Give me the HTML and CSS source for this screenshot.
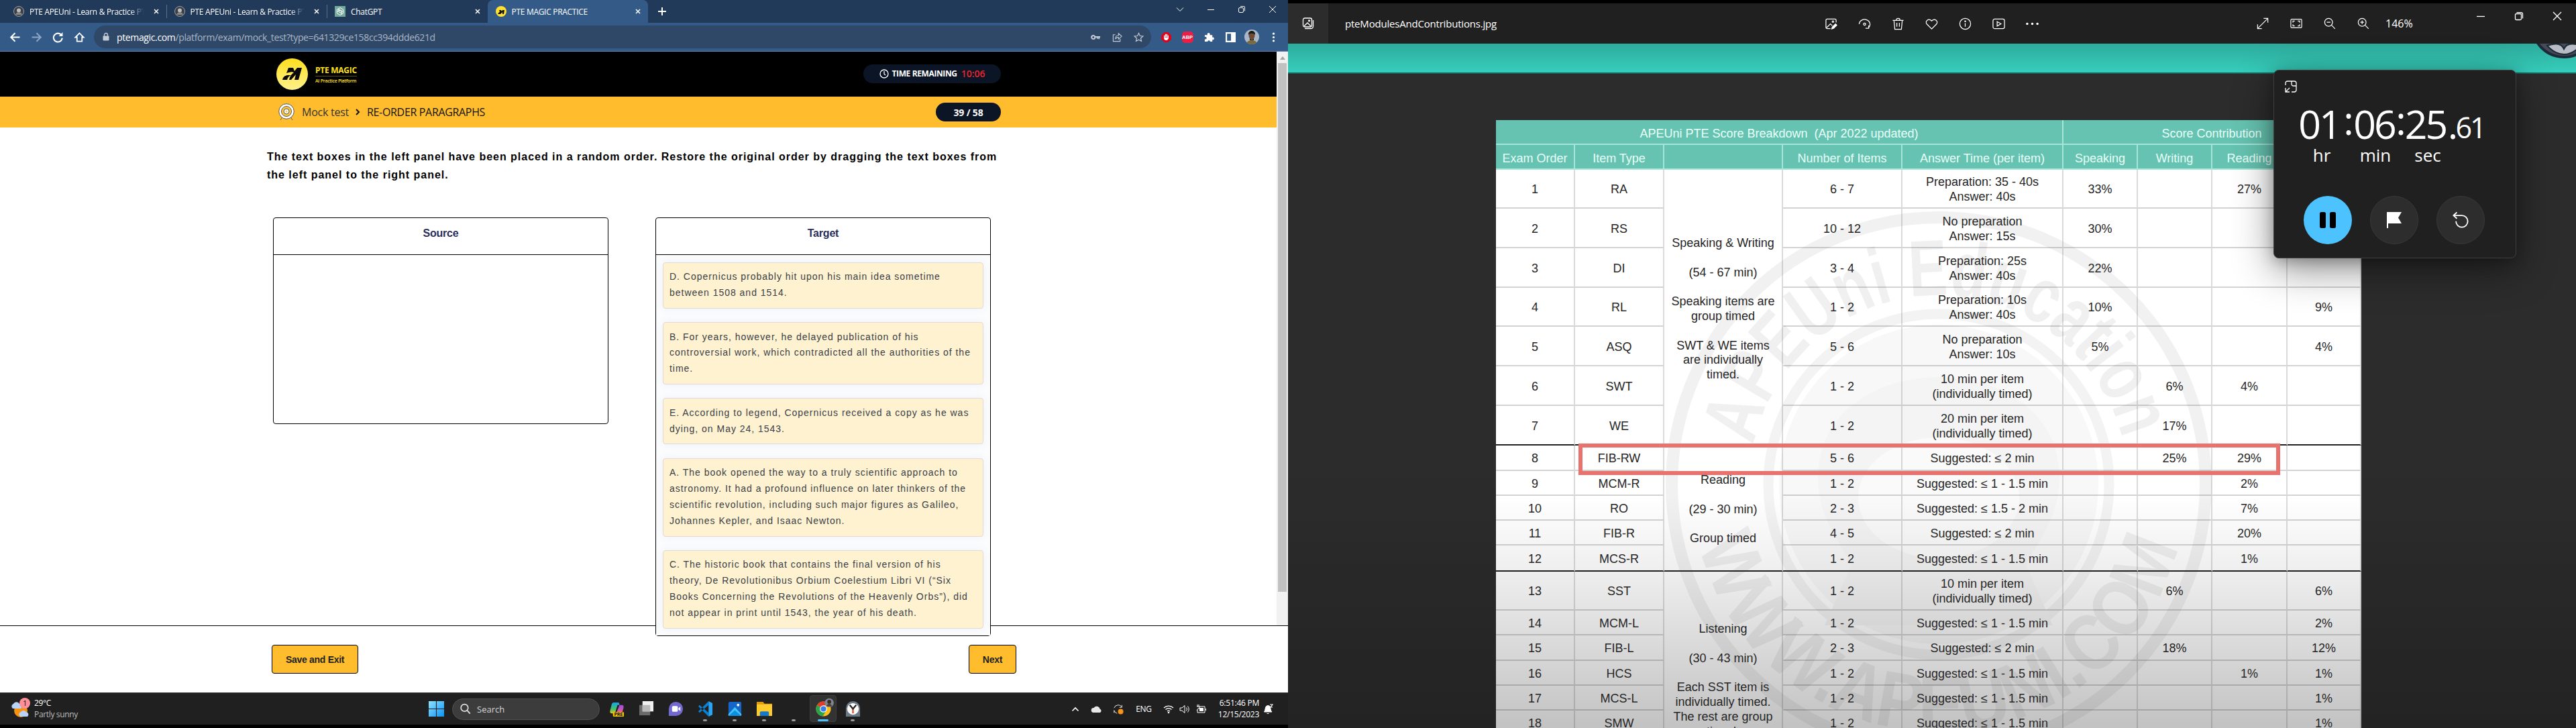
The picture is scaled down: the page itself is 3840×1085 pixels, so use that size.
FILE: index.html
```html
<!DOCTYPE html>
<html lang="en">
<head>
<meta charset="utf-8">
<title>PTE Magic Practice</title>
<link rel="stylesheet" href="styles.css">
</head>
<body>
<div class="desktop">
<section class="monitor left">
  <div class="tabstrip">
    <div class="tab"><svg class="fav" viewBox="0 0 16 16"><circle cx="8" cy="8" r="7.500" fill="#3c4045" stroke="#9aa0a6"/><circle cx="8" cy="6.500" r="3" fill="#b9bcc0"/><path d="M3 13c1-5 9-5 10 0z" fill="#888"/></svg><span class="title fade">PTE APEUni - Learn &amp; Practice PT</span><svg class="x" viewBox="0 0 8 8"><path d="M1 1l6 6M7 1l-6 6"/></svg></div>
    <div class="tab sep"><svg class="fav" viewBox="0 0 16 16"><circle cx="8" cy="8" r="7.500" fill="#3c4045" stroke="#9aa0a6"/><circle cx="8" cy="6.500" r="3" fill="#b9bcc0"/><path d="M3 13c1-5 9-5 10 0z" fill="#888"/></svg><span class="title fade">PTE APEUni - Learn &amp; Practice PT</span><svg class="x" viewBox="0 0 8 8"><path d="M1 1l6 6M7 1l-6 6"/></svg></div>
    <div class="tab sep"><svg class="fav" viewBox="0 0 16 16"><rect width="16" height="16" fill="#74aa9c"/><g fill="none" stroke="#fff" stroke-width="1"><path d="M8 2.500l4.700 2.700v5.500L8 13.500l-4.700-2.800V5.200z"/><path d="M6 3.500v5l4.500 2.500M10 12.500v-5L5.500 5M3.500 8.500l4.500-2.500 4.500 2.500"/></g></svg><span class="title">ChatGPT</span><svg class="x" viewBox="0 0 8 8"><path d="M1 1l6 6M7 1l-6 6"/></svg></div>
    <div class="tab active"><svg class="fav" viewBox="0 0 16 16"><circle cx="8" cy="8" r="8" fill="#ffe12e"/><path d="M3 12c1-2 2-3 3-3l-1-3h3l1 2 1-2h3l-1 6h-2V9l-3 3z" fill="#111"/></svg><span class="title">PTE MAGIC PRACTICE</span><svg class="x" viewBox="0 0 8 8"><path d="M1 1l6 6M7 1l-6 6"/></svg></div>
    <svg class="newtab" viewBox="0 0 12 12"><path d="M6 0v12M0 6h12"/></svg>
    <div class="winctl">
      <svg viewBox="0 0 10 10"><path d="M0 2.500l5 5 5-5"/></svg>
      <svg viewBox="0 0 10 10"><path d="M0 5.500h10"/></svg>
      <svg viewBox="0 0 10 10"><rect x=".5" y="2.500" width="7" height="7" rx="1.500"/><path d="M3 .5h5.500a1 1 0 0 1 1 1V7.500"/></svg>
      <svg viewBox="0 0 10 10"><path d="M0 0l10 10M10 0L0 10"/></svg>
    </div>
  </div>
  <div class="toolbar">
    <span class="ic"><svg viewBox="0 0 14 14"><path d="M13.500 7H1.500M7 1.200L1.200 7 7 12.800"/></svg></span>
    <span class="ic dim"><svg viewBox="0 0 14 14"><path d="M.5 7h12M7 1.200L12.800 7 7 12.800"/></svg></span>
    <span class="ic"><svg viewBox="0 0 14 14"><path d="M12 4.500A6 6 0 1 0 12.800 8"/><path d="M13.500 0v5.500H8z" fill="#fff" stroke="none"/></svg></span>
    <span class="ic"><svg viewBox="0 0 16 16"><path d="M8 1.500L1.500 8H4v6.500h8V8h2.500z"/></svg></span>
    <div class="address">
      <svg class="lock" viewBox="0 0 10 12"><rect x=".5" y="4.500" width="9" height="7" rx="1" fill="#c3cad3"/><path d="M2.500 5V3a2.500 2.500 0 0 1 5 0v2" fill="none" stroke="#c3cad3" stroke-width="1.300"/></svg>
      <span class="url"><b>ptemagic.com</b>/platform/exam/mock_test?type=641329ce158cc394ddde621d</span>
      <span class="ic grey"><svg viewBox="0 0 16 16"><circle cx="4" cy="8" r="2.700" stroke-width="2.200"/><path d="M7 7.500h8M13 8v3M10.500 8v2.500" stroke-width="2"/></svg></span>
      <span class="ic grey"><svg viewBox="0 0 16 16"><path d="M5 4H1.500v10.500h11V10.500" stroke-width="1.200"/><path d="M5 11c0-4 2-6 5-6V2l5 4.500-5 4.500V8c-2 0-4 1-5 3z" stroke-width="1.200"/></svg></span>
      <span class="ic grey"><svg viewBox="0 0 16 16"><path d="M8 1.500l2 4.400 4.800.5-3.600 3.200 1 4.700L8 11.900l-4.200 2.400 1-4.700L1.200 6.400 6 5.900z" stroke-width="1.300"/></svg></span>
    </div>
    <div class="exts">
      <span class="ic"><svg viewBox="0 0 16 16"><path d="M5 0h6l5 5v6l-5 5H5l-5-5V5z" fill="#e2001a" stroke="none"/><path d="M5 9V5M7 8V3M9 8V3M11 9V5M5 8.500c0 4.500 5.500 5 6 0" stroke="#fff" stroke-width="1.500" fill="#fff"/></svg></span>
      <span class="ic abp"><b>ABP</b></span>
      <span class="ic"><svg viewBox="0 0 16 16"><path d="M1 4.500h4.200a2.200 2.200 0 1 1 3.800 0H13V8.200a2 2 0 1 1 0 3.600V15H9.500a2 2 0 1 0-4 0H1v-4a2 2 0 1 0 0-3.500z" fill="#fff" stroke="none"/></svg></span>
      <span class="ic"><svg viewBox="0 0 14 14"><path d="M0 0h14v14H0zM2 2v10h5.500V2z" fill="#fff" fill-rule="evenodd" stroke="none"/></svg></span>
      <span class="ic big"><svg viewBox="0 0 22 22"><clipPath id="av"><circle cx="11" cy="11" r="11"/></clipPath><g clip-path="url(#av)" stroke="none"><rect width="22" height="22" fill="#a9b7c9"/><path d="M3 22c0-8 16-8 16 0z" fill="#7c6a3a"/><ellipse cx="11" cy="9" rx="4.500" ry="6" fill="#6e4b35"/><path d="M6 8c-1-8 11-8 10 0-2-3-8-3-10 0z" fill="#1a1a1a"/><path d="M8 13c2 3 4 3 6 0v3H8z" fill="#2c211b"/></g></svg></span>
      <span class="ic"><svg viewBox="0 0 14 14"><g fill="#fff" stroke="none"><circle cx="7" cy="2" r="1.500"/><circle cx="7" cy="7" r="1.500"/><circle cx="7" cy="12" r="1.500"/></g></svg></span>
    </div>
  </div>
  <div class="page">
    <div class="scrollport">
    <div class="content">
      <header class="brandbar">
        <svg class="logo" viewBox="0 0 47 47"><defs><linearGradient id="lg" x2="0" y2="1"><stop offset="0" stop-color="#ffe01c"/><stop offset="1" stop-color="#fff08c"/></linearGradient></defs><circle cx="23.500" cy="23.500" r="23.500" fill="url(#lg)"/><path d="M9 32c1-6 6-7 9-7h4c-3 1-5 3-6 7zM15 22l3-8h7l2 5 4-5h7l-5 18h-6l2-8-7 8h-3c1-5 3-8 7-11-3-2-8 0-11 1z" fill="#0a0a0a"/></svg>
        <div class="brand"><strong>PTE MAGIC</strong><small>AI Practice Platform</small></div>
        <div class="pill time"><svg viewBox="0 0 14 14"><circle cx="7" cy="7" r="6" fill="none" stroke="#fff" stroke-width="1.300"/><path d="M7 3v4.300l2 1.700" fill="none" stroke="#fff" stroke-width="1.300"/></svg><span>TIME REMAINING</span><em>10:06</em></div>
      </header>
      <div class="crumbs">
        <svg viewBox="0 0 24 26"><path d="M6 20l-3 5M18 20l3 5" stroke="#666"/><circle cx="12" cy="12" r="11.300" fill="#fff" stroke="#555"/><circle cx="12" cy="12" r="7.500" fill="#ffc93c" stroke="#555"/><circle cx="12" cy="12" r="4" fill="#fff" stroke="#555"/><circle cx="12" cy="12" r="1.500" fill="#ffc93c"/></svg>
        <span class="c1">Mock test</span><svg class="chev" viewBox="0 0 6 10"><path d="M1 1l4 4-4 4" fill="none" stroke="#111" stroke-width="2"/></svg><span>RE-ORDER PARAGRAPHS</span>
        <div class="pill count">39 / 58</div>
      </div>
      <p class="prompt">The text boxes in the left panel have been placed in a random order. Restore the original order by dragging the text boxes from<br>the left panel to the right panel.</p>
      <div class="boxes">
        <div class="box source"><h3>Source</h3></div>
        <div class="box target"><h3>Target</h3>
          <div class="cards">
            <div class="card">D. Copernicus probably hit upon his main idea sometime<br>between 1508 and 1514.</div>
            <div class="card">B. For years, however, he delayed publication of his<br>controversial work, which contradicted all the authorities of the<br>time.</div>
            <div class="card">E. According to legend, Copernicus received a copy as he was<br>dying, on May 24, 1543.</div>
            <div class="card">A. The book opened the way to a truly scientific approach to<br>astronomy. It had a profound influence on later thinkers of the<br>scientific revolution, including such major figures as Galileo,<br>Johannes Kepler, and Isaac Newton.</div>
            <div class="card">C. The historic book that contains the final version of his<br>theory, De Revolutionibus Orbium Coelestium Libri VI (“Six<br>Books Concerning the Revolutions of the Heavenly Orbs”), did<br>not appear in print until 1543, the year of his death.</div>
          </div>
        </div>
      </div>
    </div>
    <div class="scrollbar"><svg viewBox="0 0 8 5"><path d="M4 0l4 5H0z" fill="#a3a3a3"/></svg><div class="thumb"></div></div>
    </div>
    <footer class="actions"><button>Save and Exit</button><button>Next</button></footer>
  </div>
  <div class="taskbar">
    <div class="weather">
      <svg viewBox="0 0 30 30"><circle cx="14" cy="19" r="10" fill="#f5920f"/><path d="M2 16a4 4 0 0 1 1-7 5 5 0 0 1 9 0 4 4 0 0 1 2 7z" fill="#b9d2f5"/><path d="M13 28a4 4 0 0 1 1-7 5 5 0 0 1 8 0 4 4 0 0 1 2 7z" fill="#b9d2f5"/><circle cx="20" cy="8" r="8" fill="#ff8f98"/><text x="20" y="12" text-anchor="middle" font-size="11" font-family="Open Sans,sans-serif" fill="#111">1</text></svg>
      <div><span>29°C</span><span class="soft">Partly sunny</span></div>
    </div>
    <svg class="win" viewBox="0 0 24 24"><defs><linearGradient id="wg" x2="1" y2="1"><stop offset="0" stop-color="#8fe3ff"/><stop offset="1" stop-color="#0b93f5"/></linearGradient></defs><path d="M0 0h11.400v11.400H0zM12.600 0H24v11.400H12.600zM0 12.600h11.400V24H0zM12.600 12.600H24V24H12.600z" fill="url(#wg)"/></svg>
    <div class="search"><svg viewBox="0 0 16 16"><circle cx="7" cy="6.500" r="5" fill="none" stroke="#ddd" stroke-width="1.600"/><path d="M10.800 10.300l4 4.500" stroke="#ddd" stroke-width="1.800"/></svg><span>Search</span></div>
    <div class="apps">
      <span><svg viewBox="0 0 24 24"><defs><linearGradient id="cp" y2="1" x2="0"><stop offset="0" stop-color="#1aa0e8"/><stop offset=".6" stop-color="#3fc46b"/><stop offset="1" stop-color="#e8c02a"/></linearGradient><linearGradient id="cq" y2="1" x2="0"><stop offset="0" stop-color="#a04be0"/><stop offset="1" stop-color="#f0608a"/></linearGradient></defs><path d="M7 2h7c2 0 2 2 2 4h-3l-3 10c0 2-1 3-3 3H4c-3 0-3-3-2-6l2-8c1-2 1-3 3-3z" fill="url(#cp)"/><path d="M16 6h4c3 0 3 3 2 6l-2 7h-9l4-10z" fill="url(#cq)"/><rect x="6" y="17" width="17" height="7" rx="1" fill="#f8c400"/><text x="14.500" y="23.300" font-size="7.500" text-anchor="middle" font-weight="700" font-family="Open Sans,sans-serif" fill="#111">PRE</text></svg></span>
      <span><svg viewBox="0 0 24 24"><rect x="1" y="6" width="17" height="16" fill="#6a6a6a"/><rect x="6" y="0" width="17" height="16" fill="#f1f1f1"/><rect x="6" y="6" width="12" height="10" fill="#b9b9b9"/></svg></span>
      <span><svg viewBox="0 0 24 24"><path d="M1 23V12a11 11 0 1 1 11 11z" fill="#7368d0"/><rect x="6" y="7.500" width="9" height="9" rx="2" fill="#fff"/><path d="M16 11l3-2.500v7L16 13z" fill="#fff"/></svg></span>
      <span class="run"><svg viewBox="0 0 24 24"><path d="M17 0l6 3v18l-6 3z" fill="#2aa5ef"/><path d="M17 0v6L3 18l-2-2zM17 24v-6L3 6 1 8z" fill="#0b7fd0"/></svg></span>
      <span class="run"><svg viewBox="0 0 24 24"><rect x="2" y="1" width="20" height="22" rx="2" fill="#1466c9"/><path d="M2 20l10-11 10 11v3H2z" fill="#43c3f7"/><path d="M2 23l10-9 10 9z" fill="#0d8fe2"/><circle cx="17" cy="6" r="2" fill="#fff"/></svg></span>
      <span class="run"><svg viewBox="0 0 24 24"><path d="M0 1h10l2 3h12v6H0z" fill="#e09a10"/><path d="M0 5h24v18H0z" fill="#ffca2c"/><path d="M5 23v-5q0-2 2-2h10q2 0 2 2v5z" fill="#1579c8"/></svg></span>
      <span class="run"></span>
      <span class="run on"><svg viewBox="0 0 24 24"><circle cx="12" cy="12" r="11.500" fill="#fbc116"/><path d="M12 12L2 6.300A11.500 11.500 0 0 1 22 6.300H12z" fill="#e33b2e"/><path d="M12 12L7 9 2 6.300A11.500 11.500 0 0 0 11 23.500l5-8.500z" fill="#2ba24c"/><circle cx="12" cy="12" r="5.500" fill="#fff"/><circle cx="12" cy="12" r="4.300" fill="#3b7de9"/><circle cx="21" cy="2.500" r="7" fill="#7d8794"/><circle cx="21" cy="1" r="3" fill="#3b2a22"/><path d="M17 8c0-5 8-5 8 0z" fill="#4a3f30"/></svg></span>
      <span class="run"><svg viewBox="0 0 24 24"><path d="M1 24V11a11 11 0 0 1 22 0v13z" fill="#6c7a86"/><circle cx="12" cy="12" r="9" fill="#fff"/><path d="M12 12v7" stroke="#e04b22" stroke-width="2.400"/><path d="M7 6l5 6 5-6" fill="none" stroke="#222" stroke-width="2.400"/></svg></span>
    </div>
    <div class="tray">
      <span class="s"><svg viewBox="0 0 16 16"><path d="M3.500 10.500L8 6l4.500 4.500" stroke-width="1.600"/></svg></span>
      <span class="s"><svg viewBox="0 0 16 16"><path d="M3 13a3.500 3.500 0 0 1 .5-7 5 5 0 0 1 9 1.500 3 3 0 0 1 .5 5.500z" fill="#e8e8e8" stroke="none"/></svg></span>
      <span class="s"><svg viewBox="0 0 18 18"><path d="M2 7a7 7 0 0 1 13-1V2M14 6h-3M7 16a7 7 0 0 1-5-5v4"/><circle cx="13" cy="13" r="4.500" fill="#f7941d" stroke="none"/></svg></span>
      <span class="eng">ENG</span>
      <span class="m"><svg viewBox="0 0 16 16"><path d="M1 6a10 10 0 0 1 14 0M3.500 8.500a6.500 6.500 0 0 1 9 0M6 11a3 3 0 0 1 4 0" stroke-width="1.300"/><circle cx="8" cy="13" r="1.300" fill="#fff" stroke="none"/></svg></span>
      <span class="m"><svg viewBox="0 0 16 16"><path d="M1 6h3l4-3.500v11L4 10H1zM10.500 5.500q2 2.500 0 5M12.500 3.500q3.500 4.500 0 9"/></svg></span>
      <span class="m"><svg viewBox="0 0 16 16"><path d="M6 4h8v9H3V9M15.500 7v3"/><path d="M3 1v3M5 1v3M2 4h4v3H4L2 10"/><rect x="6" y="6" width="6" height="5" fill="#fff" stroke="none"/></svg></span>
      <div class="clock"><span>6:51:46 PM</span><span>12/15/2023</span></div>
      <span class="bell"><svg viewBox="0 0 16 16"><path d="M1.500 12c2-2 1-8 4-9 2-1 5 0 5 2l1 5 1.500 2z" fill="#fff"/><path d="M5.500 14.500h3"/><path d="M10 1h4l-3 4h3" stroke-width="1.200"/></svg></span>
    </div>
  </div>
  <div class="bezel"></div>
</section>

<section class="monitor right">
  <div class="photobar">
    <div class="appicon"><svg viewBox="0 0 18 18"><rect x="1.500" y="1" width="13" height="13" rx="2.500"/><path d="M16.500 4v9q0 3.500-3.500 3.500H4M3 13l5-5 5 5"/><circle cx="10.500" cy="4.800" r="1"/></svg></div>
    <span class="fname">pteModulesAndContributions.jpg</span>
    <div class="tools">
      <span><svg viewBox="0 0 20 20"><path d="M9 17.500H4q-2 0-2-2v-11q0-2 2-2h12q2 0 2 2V8M3 16l6-6 3 3"/><circle cx="13" cy="6.500" r="1.200"/><path d="M11 18l1-3 5-5 2 2-5 5z" fill="#fff"/></svg></span>
      <span><svg viewBox="0 0 20 20"><path d="M1.500 10.500a8.500 7.500 0 1 1 14.500 5.500M16.500 12.500V17h-5"/><circle cx="10" cy="10.500" r="1.700"/></svg></span>
      <span><svg viewBox="0 0 20 20"><path d="M1.500 4.500h17M7 4.500q0-3 3-3t3 3M3.500 4.500l1.300 14h10.400l1.300-14M8 8.500v6M12 8.500v6"/></svg></span>
      <span><svg viewBox="0 0 20 20"><path d="M10 18L2.300 10.300C-1 6 5 .5 10 5.500c5-5 11 .5 7.700 4.800z"/></svg></span>
      <span><svg viewBox="0 0 20 20"><circle cx="10" cy="10" r="8.500"/><path d="M10 9v5.500"/><circle cx="10" cy="6" r=".7" fill="#fff"/></svg></span>
      <span><svg viewBox="0 0 20 20"><rect x="1" y="2.500" width="18" height="15" rx="2.500"/><path d="M7.500 6.500l6 3.500-6 3.500z"/></svg></span>
      <span><svg viewBox="0 0 20 20"><g fill="#fff" stroke="none"><circle cx="2" cy="10" r="1.800"/><circle cx="10" cy="10" r="1.800"/><circle cx="18" cy="10" r="1.800"/></g></svg></span>
    </div>
    <div class="tools zoomers">
      <span><svg viewBox="0 0 20 20"><path d="M1.500 18.500l17-17M11.500 1.500h7v7M1.500 11.500v7h7"/></svg></span>
      <span><svg viewBox="0 0 20 20"><rect x="1" y="3" width="18" height="14" rx="1.500"/><path d="M4.500 8.500V6h3M12.500 6h3v2.500M15.500 11.500V14h-3M7.500 14h-3v-2.500"/></svg></span>
      <span><svg viewBox="0 0 20 20"><circle cx="8" cy="8" r="6.500"/><path d="M5 8h6M12.700 12.700l6 6"/></svg></span>
      <span><svg viewBox="0 0 20 20"><circle cx="8" cy="8" r="6.500"/><path d="M5 8h6M8 5v6M12.700 12.700l6 6"/></svg></span>
    </div>
    <span class="pct">146%</span>
    <div class="wctl">
      <span><svg viewBox="0 0 12 12"><path d="M0 6.500h12"/></svg></span>
      <span><svg viewBox="0 0 12 12"><rect x=".5" y="2.500" width="9" height="9" rx="1.500"/><path d="M2.500.6h6.500q2.500 0 2.500 2.500v6.500"/></svg></span>
      <span><svg viewBox="0 0 12 12"><path d="M0 0l12 12M12 0L0 12"/></svg></span>
    </div>
  </div>
  <div class="teal"><svg viewBox="0 0 98 98"><circle cx="49" cy="49" r="47" fill="#474b57" stroke="#1c2a38" stroke-width="4"/><path d="M24 79q20-7 25 5 5-12 25-5-12 13-25 13T24 79z" fill="#b9bcc4" stroke="#1c2a38" stroke-width="2"/><path d="M32 68q17 6 34 0" fill="none" stroke="#242a38" stroke-width="5"/></svg></div>
  <div class="canvas">
    <div class="sheet">
      <svg class="mark" viewBox="0 0 820 820">
        <defs><path id="arcTop" d="M139 488A282 282 0 1 1 681 488"/><path id="arcBot" d="M51.400 493A368 368 0 0 0 768.600 493"/></defs>
        <circle cx="410" cy="410" r="398" fill="none" stroke="#f1f1f1" stroke-width="18"/>
        <circle cx="410" cy="410" r="254" fill="none" stroke="#f3f3f3" stroke-width="15"/>
        <circle cx="410" cy="410" r="238" fill="#f8f8f8"/>
        <path d="M230 400c0-200 360-200 360 0 0 60-30 90-50 130l40 90H240l40-90c-20-40-50-70-50-130z" fill="#f4f4f4"/>
        <ellipse cx="410" cy="430" rx="120" ry="90" fill="#fafafa"/>
        <g font-family="Liberation Sans Narrow,Liberation Sans,sans-serif" font-weight="700" font-size="118" fill="#f0f0f0">
        <text><textPath href="#arcTop" startOffset="138" textLength="758" lengthAdjust="spacingAndGlyphs">APEUni Education</textPath></text>
        <text><textPath href="#arcBot" startOffset="7" textLength="972" lengthAdjust="spacingAndGlyphs">WWW.APEUNI.COM</textPath></text>
        </g>
      </svg>
      <div class="shade"></div>
      <div class="grid">
        <div class="h a">APEUni PTE Score Breakdown&nbsp; (Apr 2022 updated)</div><div class="h b">Score Contribution</div>
        <div class="h">Exam Order</div><div class="h">Item Type</div><div class="h"></div><div class="h">Number of Items</div><div class="h">Answer Time (per item)</div><div class="h">Speaking</div><div class="h">Writing</div><div class="h">Reading</div><div class="h"></div>
        <div class="g g1">Speaking &amp; Writing<br><br>(54 - 67 min)<br><br>Speaking items are<br>group timed<br><br>SWT &amp; WE items<br>are individually<br>timed.</div>
        <div class="g g2">Reading<br><br>(29 - 30 min)<br><br>Group timed</div>
        <div class="g g3">Listening<br><br>(30 - 43 min)<br><br>Each SST item is<br>individually timed.<br>The rest are group<br>timed.</div>
        <div>1</div><div>RA</div><div>6 - 7</div><div>Preparation: 35 - 40s<br>Answer: 40s</div><div>33%</div><div></div><div>27%</div><div></div>
        <div>2</div><div>RS</div><div>10 - 12</div><div>No preparation<br>Answer: 15s</div><div>30%</div><div></div><div></div><div></div>
        <div>3</div><div>DI</div><div>3 - 4</div><div>Preparation: 25s<br>Answer: 40s</div><div>22%</div><div></div><div></div><div></div>
        <div>4</div><div>RL</div><div>1 - 2</div><div>Preparation: 10s<br>Answer: 40s</div><div>10%</div><div></div><div></div><div>9%</div>
        <div>5</div><div>ASQ</div><div>5 - 6</div><div>No preparation<br>Answer: 10s</div><div>5%</div><div></div><div></div><div>4%</div>
        <div>6</div><div>SWT</div><div>1 - 2</div><div>10 min per item<br>(individually timed)</div><div></div><div>6%</div><div>4%</div><div></div>
        <div class="k">7</div><div class="k">WE</div><div class="k">1 - 2</div><div class="k">20 min per item<br>(individually timed)</div><div class="k"></div><div class="k">17%</div><div class="k"></div><div class="k"></div>
        <div>8</div><div>FIB-RW</div><div>5 - 6</div><div>Suggested: ≤ 2 min</div><div></div><div>25%</div><div>29%</div><div></div>
        <div>9</div><div>MCM-R</div><div>1 - 2</div><div>Suggested: ≤ 1 - 1.5 min</div><div></div><div></div><div>2%</div><div></div>
        <div>10</div><div>RO</div><div>2 - 3</div><div>Suggested: ≤ 1.5 - 2 min</div><div></div><div></div><div>7%</div><div></div>
        <div>11</div><div>FIB-R</div><div>4 - 5</div><div>Suggested: ≤ 2 min</div><div></div><div></div><div>20%</div><div></div>
        <div class="k">12</div><div class="k">MCS-R</div><div class="k">1 - 2</div><div class="k">Suggested: ≤ 1 - 1.5 min</div><div class="k"></div><div class="k"></div><div class="k">1%</div><div class="k"></div>
        <div>13</div><div>SST</div><div>1 - 2</div><div>10 min per item<br>(individually timed)</div><div></div><div>6%</div><div></div><div>6%</div>
        <div>14</div><div>MCM-L</div><div>1 - 2</div><div>Suggested: ≤ 1 - 1.5 min</div><div></div><div></div><div></div><div>2%</div>
        <div>15</div><div>FIB-L</div><div>2 - 3</div><div>Suggested: ≤ 2 min</div><div></div><div>18%</div><div></div><div>12%</div>
        <div>16</div><div>HCS</div><div>1 - 2</div><div>Suggested: ≤ 1 - 1.5 min</div><div></div><div></div><div>1%</div><div>1%</div>
        <div>17</div><div>MCS-L</div><div>1 - 2</div><div>Suggested: ≤ 1 - 1.5 min</div><div></div><div></div><div></div><div>1%</div>
        <div>18</div><div>SMW</div><div>1 - 2</div><div>Suggested: ≤ 1 - 1.5 min</div><div></div><div></div><div></div><div>1%</div>
      </div>
      <div class="highlight"></div>
    </div>
  </div>
  <div class="stopwatch">
    <svg class="pin" viewBox="0 0 18 18"><path d="M1 7V4q0-3 3-3h10q3 0 3 3v10q0 3-3 3h-4M10 1v4q0 3 3 3h4M1 17l6-6M1 11v6h6"/></svg>
    <div class="digits"><span>01</span><i>:</i><span>06</span><i>:</i><span>25</span><b>.</b><small>61</small></div>
    <div class="units"><span>hr</span><span>min</span><span>sec</span></div>
    <div class="rounds">
      <span class="pause"><svg viewBox="0 0 24 24"><rect x="0" y="0" width="9" height="24" rx="2.500"/><rect x="15" y="0" width="9" height="24" rx="2.500"/></svg></span>
      <span><svg viewBox="0 0 24 24"><path d="M1 0h22l-5 8.500L23 17H3v7H1z" fill="#fff"/></svg></span>
      <span><svg viewBox="0 0 26 26"><path d="M1.500 5.500H15a9.500 9.500 0 1 1-9.500 9.500M7 .5l-5.500 5 5.500 5" fill="none" stroke="#fff" stroke-width="2"/></svg></span>
    </div>
  </div>
</section>
</div>
</body>
</html>
```
FILE: styles.css
```css
* { box-sizing: border-box; }
body { margin: 0; background: #000; font-family: "Open Sans", "Noto Sans", sans-serif; }
i, em { font-style: normal; }
svg { display: block; flex: none; overflow: visible; }
.desktop { display: flex; width: 3840px; height: 1085px; overflow: hidden; }
.monitor { position: relative; width: 1920px; height: 1085px; display: flex; flex-direction: column; overflow: hidden; }

/* browser chrome */
.tabstrip { height: 34px; background: #223a5a; display: flex; padding-left: 8px; color: #fff; }
.tab { position: relative; width: 239.500px; height: 34px; display: flex; align-items: center; padding: 0 11px 0 12px; font-size: 12px; letter-spacing: -.3px; white-space: nowrap; }
.tab.sep::before { content: ""; position: absolute; left: 0; top: 7px; width: 1px; height: 20px; background: #5b718c; }
.tab.active { background: #345a88; border-radius: 8px 8px 0 0; }
.fav { width: 16px; height: 16px; margin-right: 8px; }
.title { flex: 1; overflow: hidden; margin-right: 11px; }
.title.fade { -webkit-mask-image: linear-gradient(90deg, #000 86%, transparent 98%); mask-image: linear-gradient(90deg, #000 86%, transparent 98%); }
.x { width: 8px; height: 8px; stroke: #fff; stroke-width: 1.500; }
.newtab { width: 12px; height: 12px; stroke: #fff; stroke-width: 2; margin: 11px 0 0 15px; }
.winctl { margin-left: auto; display: flex; height: 28px; align-items: center; }
.winctl svg { width: 10px; height: 10px; margin: 0 18px; fill: none; stroke: #fff; stroke-width: 1; }
.toolbar { height: 43px; background: #345a88; border-bottom: 1px solid #5d84b5; display: flex; align-items: center; padding-left: 6px; }
.ic { width: 32px; display: flex; justify-content: center; align-items: center; }
.ic svg { width: 15px; height: 15px; fill: none; stroke: #fff; stroke-width: 1.900; }
.ic.dim svg { stroke: #8ea6c3; }
.ic.grey svg { stroke: #c3cad3; }
.ic.big svg { width: 22px; height: 22px; }
.abp b { width: 17px; height: 17px; border-radius: 5px; background: #ed1e45; color: #fff; font: 700 7.500px/17px "Liberation Sans", sans-serif; text-align: center; }
.address { margin-left: 6px; width: 1576px; height: 34px; border-radius: 17px; background: #2f4868; display: flex; align-items: center; padding: 0 3px 0 13px; }
.lock { width: 10px; height: 12px; margin-right: 11px; }
.url { font-size: 14px; letter-spacing: -.36px; color: #a9b5c4; margin-right: auto; }
.url b { font-weight: 400; color: #fff; }
.exts { display: flex; margin-left: 6px; }

/* exam page */
.page { height: 955px; background: #fff; display: flex; flex-direction: column; }
.scrollport { height: 855px; display: flex; }
.content { width: 1903px; position: relative; z-index: 1; }
.scrollbar { width: 17px; background: #f1f1f1; display: flex; flex-direction: column; align-items: center; padding-top: 7px; }
.scrollbar svg { width: 8px; height: 5px; }
.thumb { width: 13px; height: 788px; margin-top: 5px; background: #c1c1c1; }
.brandbar { height: 67px; background: #000; display: flex; align-items: center; padding: 0 411px 0 412px; }
.logo { width: 47px; height: 47px; margin-right: 11px; }
.brand { display: flex; flex-direction: column; color: #ffe01c; width: 62px; white-space: nowrap; }
.brand strong { font-size: 12px; line-height: 15px; letter-spacing: -.27px; border-bottom: 1px solid #5c5110; padding-bottom: 1px; }
.brand small { font-size: 7px; line-height: 9px; margin-top: 2px; font-weight: 600; letter-spacing: -.3px; }
.pill { height: 28px; border-radius: 14px; background: #0b1526; color: #fff; font-weight: 700; display: flex; align-items: center; margin-left: auto; justify-content: center; white-space: nowrap; }
.time { width: 205px; font-size: 12px; letter-spacing: -.38px; margin-bottom: 2px; }
.time svg { width: 14px; height: 14px; margin-right: 5px; }
.time em { color: #e8252b; font-size: 14px; margin-left: 6px; font-weight: 600; letter-spacing: 0; }
.count { width: 97px; font-size: 14px; letter-spacing: -.15px; }
.crumbs { height: 46px; background: #ffbd2e; display: flex; align-items: center; padding: 0 411px 0 415px; font-size: 16px; letter-spacing: -.33px; color: #111; white-space: nowrap; }
.crumbs > svg:first-child { width: 24px; height: 26px; margin-right: 11px; fill: none; }
.crumbs .chev { width: 6px; height: 10px; margin: 0 11px 0 10px; }
.c1 { color: #333; letter-spacing: -.25px; }
.prompt { margin: 30px 0 0 398px; font: 700 16px/27px "Liberation Sans", Arial, sans-serif; color: #000; white-space: nowrap; letter-spacing: .98px; }
.boxes { display: flex; margin: 50px 0 0 407px; gap: 70px; align-items: flex-start; }
.box { width: 500px; border: 1px solid #000; border-radius: 4px; }
.source { height: 308px; }
.target { height: 624px; }
.box h3 { margin: 0; height: 55px; border-bottom: 1px solid #000; text-align: center; font: 700 16px/46px "Liberation Sans", Arial, sans-serif; letter-spacing: -.2px; color: #2b2f5b; }
.cards { padding: 10.500px 10px; display: flex; flex-direction: column; gap: 20.200px; background: #fbfcfd; height: 567px; }
.card { border: 1px solid #e3d9dd; border-radius: 4px; background: #fff2d0; padding: 9.700px 9px; font: 14px/23.900px "Liberation Sans", Arial, sans-serif; color: #3a3f48; letter-spacing: .98px; white-space: nowrap; box-shadow: 0 0 14px rgba(60, 90, 150, .07); }
.actions { height: 100px; border-top: 1px solid #000; display: flex; justify-content: space-between; align-items: flex-start; padding: 28px 405px 0; background: #fff; }
.actions button { height: 43px; padding: 0 20px; border: 1px solid #000; border-radius: 4px; background: #ffbd2e; font: 700 14px/40px "Liberation Sans", Arial, sans-serif; letter-spacing: -.3px; color: #222; }

/* taskbar */
.taskbar { height: 48px; background: #202020; border-top: 1px solid #3d3d3d; display: flex; align-items: center; color: #fff; font-size: 12px; letter-spacing: -.25px; white-space: nowrap; }
.weather { width: 639px; display: flex; align-items: center; padding-left: 17px; }
.weather svg { width: 30px; height: 30px; margin: -4px 4px 0 0; }
.weather div { display: flex; flex-direction: column; line-height: 16.500px; letter-spacing: -.34px; }
.soft { color: #bdbdbd; }
.win { width: 23px; height: 23px; }
.search { width: 220px; height: 32px; margin: 0 3px 0 12px; border-radius: 16px; background: #3c3c3c; border: 1px solid #505050; display: flex; align-items: center; padding-left: 10px; font-size: 13px; letter-spacing: 0; color: #d5d5d5; }
.search svg { width: 17px; height: 17px; margin-right: 9px; }
.apps { display: flex; }
.apps span { position: relative; width: 44px; height: 47px; display: flex; align-items: center; justify-content: center; }
.apps svg { width: 23px; height: 23px; position: relative; z-index: 1; }
.run::after { content: ""; position: absolute; left: 19px; bottom: 5px; width: 6px; height: 3px; border-radius: 2px; background: #9a9a9a; }
.on::before { content: ""; position: absolute; inset: 3px 2px 4px; border-radius: 4px; background: #333; border: 1px solid #3e3e3e; }
.run.on::after { left: 14px; width: 16px; background: #4cc2ff; }
.tray { margin-left: auto; display: flex; align-items: center; padding-right: 16px; }
.tray svg { width: 16px; height: 16px; fill: none; stroke: #fff; }
.s { width: 32px; display: flex; justify-content: center; }
.eng { width: 44px; text-align: center; margin-right: 3px; }
.m { width: 24px; display: flex; justify-content: center; }
.clock { width: 75px; text-align: right; display: flex; flex-direction: column; align-items: flex-end; line-height: 16.500px; }
.bell { width: 27px; padding-left: 6px; }
.bezel { height: 5px; background: #000; }

/* photo viewer */
.right { background: #2c2c2c; }
.photobar { height: 65px; border-top: 5px solid #000; background: #202020; display: flex; align-items: center; color: #fff; }
.photobar svg, .pin { fill: none; stroke: #fff; stroke-width: 1.300; }
.appicon { width: 60px; height: 60px; background: #2c2c2c; display: flex; align-items: center; justify-content: center; }
.appicon svg { width: 18px; height: 18px; }
.fname { margin-left: 25px; width: 699px; font-size: 15px; letter-spacing: -.2px; white-space: nowrap; }
.tools { display: flex; }
.tools span { width: 50px; display: flex; justify-content: center; }
.tools svg { width: 19px; height: 19px; }
.zoomers { margin-left: 294px; }
.zoomers svg { width: 18px; height: 18px; }
.pct { margin-left: 8px; font-size: 16px; }
.wctl { margin-left: auto; display: flex; align-self: flex-start; padding-top: 13px; }
.wctl span { width: 57px; display: flex; justify-content: center; }
.wctl svg { width: 12px; height: 12px; }
.teal { height: 45px; background: linear-gradient(#2eab9c, #36cdbb 42px); border-bottom: 2px solid #17665d; position: relative; overflow: hidden; }
.teal svg { position: absolute; left: 1853px; top: -76px; width: 98px; height: 98px; }
.canvas { flex: 1; padding: 69px 0 0 310px; background: linear-gradient(#2c2c2c 60%, #232323); overflow: hidden; }
.sheet { position: relative; width: 1290px; height: 918px; background: #fff; overflow: hidden; }
.mark { position: absolute; left: 250px; top: 133px; width: 820px; height: 820px; }
.shade { position: absolute; inset: 0; background: linear-gradient(transparent 560px, rgba(0,0,0,.065) 675px, rgba(0,0,0,.24) 906px); }
.grid { position: relative; display: grid; grid-template-columns: 118px 133px 177px 178px 240px 111px 111px 112px 110px; grid-template-rows: 37px 37px 58px 59px 59px 58px 59px 59px 59px 38px 37px 37px 37px 39px 58px 37px 38px 37px 37px 38px; font: 18px/21.800px "Liberation Sans", Arial, sans-serif; color: #262626; }
.grid > div { display: flex; align-items: center; justify-content: center; text-align: center; white-space: nowrap; padding-top: 4px; border-right: 2px solid rgba(0,0,0,.14); border-bottom: 2px solid rgba(0,0,0,.17); }
.grid > .h { background: #66c3b1; color: #e6fff8; border-color: #a5e6d8; padding-top: 7px; }
.grid > .a { grid-column: 1 / 6; }
.grid > .b { grid-column: 6 / 10; }
.grid > .g { grid-column: 3; display: block; }
.grid > .g1 { grid-row: 3 / 10; padding-top: 99px; border-bottom-color: #222; }
.grid > .g2 { grid-row: 10 / 15; padding-top: 41px; border-bottom-color: #222; }
.grid > .g3 { grid-row: 15 / 21; padding-top: 75px; }
.grid > .k { border-bottom-color: #222; }
.highlight { position: absolute; left: 123px; top: 482px; width: 1046px; height: 47px; border: 6px solid #e8726e; }

/* stopwatch mini window */
.stopwatch { position: absolute; left: 1469px; top: 104px; width: 362px; height: 281px; border-radius: 8px; background: #202020; border: 1px solid #3f3f3f; box-shadow: 0 16px 60px rgba(0,0,0,.45), 0 4px 20px rgba(0,0,0,.25); color: #fff; }
.pin { width: 18px; height: 18px; margin: 15px 0 0 16px; }
.digits { display: grid; grid-template-columns: 62px 23px 56px 21px 55px 24px 30px; margin: 10px 0 0 36px; height: 60px; align-items: center; font-size: 59px; line-height: 60px; letter-spacing: -3px; }
.digits > * { display: flex; justify-content: center; font-weight: 400; }
.digits i { transform: translateY(-6px); }
.digits small { font-size: 43px; padding-top: 12px; letter-spacing: -3px; }
.units { display: grid; grid-template-columns: 82px 78px 78px; margin: 3px 0 0 30px; font-size: 26px; line-height: 40px; }
.units span { text-align: center; }
.rounds { display: flex; gap: 27px; margin: 41px 0 0 44px; }
.rounds span { width: 72px; height: 72px; border-radius: 50%; background: #2d2d2d; border: 1px solid #393939; display: flex; align-items: center; justify-content: center; }
.rounds .pause { background: #4cc2ff; border: 0; }
.rounds svg { width: 24px; height: 24px; }
```
